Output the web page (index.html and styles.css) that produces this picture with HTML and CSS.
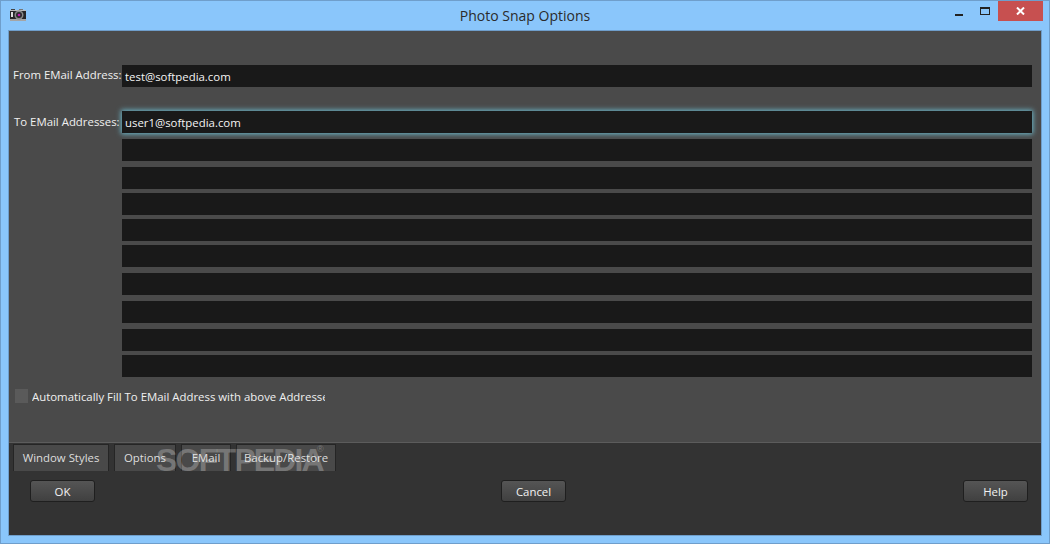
FILE: index.html
```html
<!DOCTYPE html>
<html lang="en">
<head>
<meta charset="utf-8">
<title>Photo Snap Options</title>
<link rel="stylesheet" href="styles.css">
</head>
<body>
<div class="window">
  <header class="titlebar">
    <svg class="app-icon" width="16" height="12" viewBox="0 0 16 12">
      <rect x="1" y="0" width="4" height="2" fill="#444"/>
      <rect x="9" y="0" width="4" height="1" fill="#777"/>
      <rect x="0" y="1" width="16" height="10" fill="#262626"/>
      <rect x="0" y="1" width="16" height="1" fill="#bbb"/>
      <rect x="0" y="10" width="16" height="2" fill="#a5a5a5"/>
      <circle cx="9" cy="6" r="4.500" fill="#8a8a8a"/>
      <circle cx="9" cy="6" r="3" fill="#2b2b2b"/>
      <circle cx="9" cy="6" r="1.300" fill="#c218b0"/>
      <rect x="1" y="3" width="2" height="5" fill="#ddd"/>
    </svg>
    <h1 class="title">Photo Snap Options</h1>
    <div class="controls">
      <button class="ctl ctl-min" aria-label="Minimize"><span class="min-glyph"></span></button>
      <button class="ctl ctl-max" aria-label="Maximize"><span class="max-glyph"></span></button>
      <button class="ctl ctl-close" aria-label="Close">
        <svg width="9" height="8" viewBox="0 0 9 8"><path d="M1 .5 8 7.500M8 .5 1 7.500" stroke="#fff" stroke-width="2" fill="none"/></svg>
      </button>
    </div>
  </header>
  <main class="client">
    <section class="content">
      <div class="form-row from-row">
        <label class="lbl lbl-from">From EMail Address:</label>
        <div class="field">test@softpedia.com</div>
      </div>
      <div class="form-row to-row">
        <label class="lbl lbl-to">To EMail Addresses:</label>
        <div class="field-list">
          <div class="field focused">user1@softpedia.com</div>
          <div class="field g6"></div>
          <div class="field g6"></div>
          <div class="field g4"></div>
          <div class="field g4"></div>
          <div class="field g4"></div>
          <div class="field g6"></div>
          <div class="field g6"></div>
          <div class="field g6"></div>
          <div class="field g4"></div>
        </div>
      </div>
      <div class="check-row">
        <span class="check"></span>
        <span class="check-text">Automatically Fill To EMail Address with above Addresses</span>
      </div>
    </section>
    <footer class="bottom">
      <nav class="tabs">
        <div class="tab t1">Window Styles</div>
        <div class="tab t2">Options</div>
        <div class="tab t3">EMail</div>
        <div class="tab t4">Backup/Restore</div>
      </nav>
      <div class="buttons">
        <button class="btn">OK</button>
        <button class="btn btn-cancel">Cancel</button>
        <button class="btn btn-help">Help</button>
      </div>
      <div class="watermark">SOFTPEDIA<sup class="reg">®</sup></div>
    </footer>
  </main>
</div>
</body>
</html>
```
FILE: styles.css
```css
* { box-sizing: border-box; }
html, body { margin: 0; height: 100%; overflow: hidden; }
body { font-family: "Open Sans", "Noto Sans", sans-serif; font-size: 11.4px; color: #f0f0f0; }
.window {
  width: 1050px; height: 544px; background: #8ac6fb;
  border: 1px solid #6f9ecb; display: flex; flex-direction: column;
  padding: 0 7px 7px;
}
.titlebar { height: 29px; flex: none; position: relative; display: flex; align-items: center; justify-content: center; }
.app-icon { position: absolute; left: 2px; top: 8px; }
.title { margin: 0; font-size: 14px; font-weight: 400; color: #2b2b2b; }
.controls { position: absolute; right: 0; top: 0; display: flex; }
.ctl { border: 0; padding: 0; background: transparent; height: 20px; display: flex; align-items: center; justify-content: center; }
.ctl-min { width: 26px; }
.ctl-max { width: 26px; }
.ctl-close { width: 45px; background: #c75050; margin-right: -1px; }
.min-glyph { width: 8px; height: 2px; background: #222; margin-top: 8px; }
.max-glyph { width: 10px; height: 8px; border: 1px solid #222; border-top-width: 2px; margin-top: -1px; }
.client { flex: 1; display: flex; flex-direction: column; border: 1px solid #6f9ecb; background: #4a4a4a; min-height: 0; }
.content { height: 411px; flex: none; padding-top: 34px; }
.form-row { display: flex; align-items: flex-start; }
.to-row { margin-top: 24px; }
.lbl { width: 113px; flex: none; white-space: nowrap; line-height: 17px; }
.lbl-from { padding-left: 4px; padding-top: 1px; }
.lbl-to { padding-left: 5px; padding-top: 2px; }
.field { width: 910px; height: 22px; background: #191919; color: #f4f4f4; padding: 0 3px; line-height: 23px; }
.field-list { display: flex; flex-direction: column; }
.focused { box-shadow: 0 0 5px 1px #6cb8cb; }
.g6 { margin-top: 6px; }
.g4 { margin-top: 4px; }
.check-row { display: flex; align-items: center; margin: 11px 0 0 6px; height: 16px; }
.check { width: 13px; height: 14px; background: #5a5a5a; flex: none; }
.check-text { width: 293px; margin-left: 4px; overflow: hidden; white-space: nowrap; flex: none; }
.bottom { flex: 1; background: #333; border-top: 1px solid #5c5c5c; position: relative; padding: 1px 0 0 4px; }
.tabs { display: flex; height: 27px; }
.tab { background: #494949; border: 1px solid #252525; border-bottom: 0; padding-bottom: 2px; display: flex; align-items: center; justify-content: center; color: #ddd; margin-right: 5px; }
.t1 { width: 96px; }
.t2 { width: 62px; }
.t3 { width: 50px; }
.t4 { width: 100px; margin-right: 0; }
.buttons { display: flex; padding: 9px 0 0 17px; }
.btn {
  width: 65px; height: 22px; border: 1px solid #1f1f1f; border-radius: 3px;
  background: linear-gradient(#555, #404040); color: #f2f2f2;
  font: inherit; padding: 0;
}
.btn-cancel { margin-left: 406px; }
.btn-help { margin-left: 397px; }
.watermark {
  position: absolute; left: 147px; top: 0; font-family: "Liberation Sans", sans-serif;
  font-size: 32px; font-weight: 700; line-height: 34px; color: rgba(255,255,255,.26);
  white-space: nowrap; letter-spacing: -1.8px; pointer-events: none;
}
.reg { position: absolute; left: 161px; top: -1px; font-size: 9px; font-weight: 400; line-height: 14px; }
```
